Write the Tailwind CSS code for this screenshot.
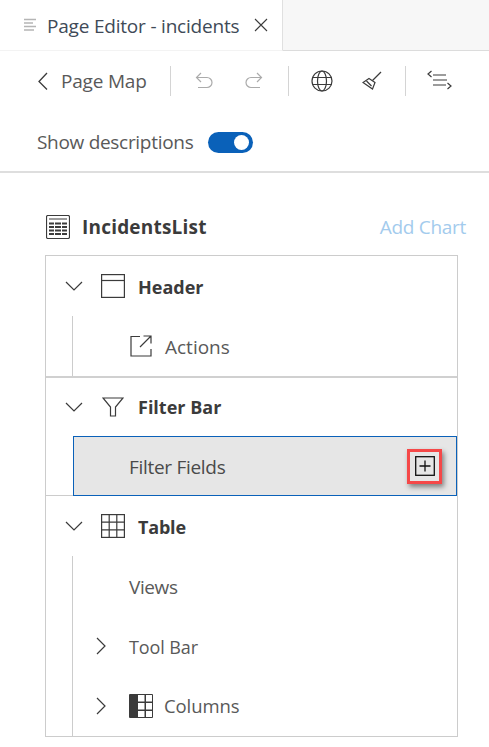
<!DOCTYPE html>
<html lang="en">
<head>
    <meta charset="UTF-8">
    <meta name="viewport" content="width=device-width, initial-scale=1.0">
    <title>Page Editor - incidents</title>
    <script src="https://cdn.jsdelivr.net/npm/@tailwindcss/browser@4"></script>
</head>
<body class="bg-white font-['Open_Sans',sans-serif] text-[#3b3b3b] h-[747px] w-[489px] overflow-hidden">

    <!-- Tab bar -->
    <div class="flex h-[51px]">
        <div class="flex items-center w-[283px] border-r border-[#e0e0e0] pl-[24px] border-b border-b-[#f3f3f3]">
            <svg width="13" height="14" viewBox="0 0 13 14" class="mr-[10px] text-[#b5b5b5]" fill="none" stroke="currentColor" stroke-width="1.300"><path d="M0 1.500h12M0 5h9M0 8.500h12M0 12h10"/></svg>
            <span class="pt-[2px] text-[19px] tracking-[-0.2px] text-[#404a57] whitespace-nowrap">Page Editor - incidents</span>
            <svg width="14" height="14" viewBox="0 0 14 14" class="ml-[15px]" fill="none" stroke="#3b3b3b" stroke-width="1.100"><path d="M1 1l12 12M13 1L1 13"/></svg>
        </div>
        <div class="flex-1 bg-[#f7f7f7] border-b border-[#dcdcdc]"></div>
    </div>

    <!-- Toolbar -->
    <div class="flex items-center h-[30px] mt-[15px] pl-[37px]">
        <svg width="12" height="18" viewBox="0 0 12 18" fill="none" stroke="#3b3b3b" stroke-width="1.300"><path d="M10 1L2 9.500l8 8"/></svg>
        <span class="ml-[12px] text-[19px] tracking-[-0.2px] text-[#595959] whitespace-nowrap">Page Map</span>
        <div class="ml-[23px] w-px h-[30px] bg-[#d4d4d4]"></div>
        <svg class="ml-[23px]" width="20" height="20" viewBox="0 0 20 20" fill="none" stroke="#ababab" stroke-width="1.200"><path d="M7 2L2.500 6.500 7 11"/><path d="M2.500 6.500H13a5 5 0 0 1 5 5v0a5 5 0 0 1-5 5H4"/></svg>
        <svg class="ml-[30px]" width="20" height="20" viewBox="0 0 20 20" fill="none" stroke="#ababab" stroke-width="1.200"><path d="M13 2l4.500 4.500L13 11"/><path d="M17.500 6.500H7a5 5 0 0 0-5 5v0a5 5 0 0 0 5 5h9"/></svg>
        <div class="ml-[24px] w-px h-[30px] bg-[#d4d4d4]"></div>
        <svg class="ml-[22px]" width="22" height="22" viewBox="0 0 22 22" fill="none" stroke="#3b3b3b" stroke-width="1.200"><circle cx="11" cy="11" r="10"/><ellipse cx="11" cy="11" rx="4.500" ry="10"/><path d="M1.500 7.500h19M1.500 14.500h19"/></svg>
        <svg class="ml-[29px]" width="20" height="20" viewBox="0 0 20 20" fill="none" stroke="#3b3b3b" stroke-width="1.200"><path d="M19 1l-8.500 8.500"/><path d="M7 7.500l6 4-2.500 6.500L1 11.500z"/><path d="M4.500 10l5 5"/></svg>
        <div class="ml-[23px] w-px h-[30px] bg-[#d4d4d4]"></div>
        <svg class="ml-[21px] -mt-[2px]" width="25" height="20" viewBox="0 0 25 20" fill="none" stroke="#3b3b3b" stroke-width="1.200"><path d="M4.500 1L1 4l3.500 3"/><path d="M6 5h13M6 10h14M6 15h13"/><path d="M20.500 13l3.500 3-3.500 3"/></svg>
    </div>

    <!-- Show descriptions -->
    <div class="flex items-center h-[22px] mt-[35px] pl-[37px]">
        <span class="text-[19px] tracking-[-0.3px] text-[#595959] whitespace-nowrap">Show descriptions</span>
        <div class="ml-[15px] w-[45px] h-[21px] rounded-full bg-[#0a61b9] flex items-center justify-end pr-[4px]">
            <div class="w-[15px] h-[15px] rounded-full bg-white"></div>
        </div>
    </div>

    <div class="mt-[18px] h-[2px] bg-[#dedede]"></div>

    <!-- Title row -->
    <div class="flex items-center h-[30px] mt-[39px] pl-[46px] pr-[23px]">
        <svg width="24" height="24" viewBox="0 0 24 24" fill="none" stroke="#3b3b3b"><rect x="0.500" y="0.500" width="23" height="23" rx="1.500" stroke-width="1.200"/><path d="M3 4h18" stroke-width="1"/><path d="M3 8.500h18M3 12h18M3 15.500h18M3 19h18" stroke-width="2"/><path d="M8.500 7v14M15.500 7v14" stroke="#fff" stroke-width="1"/></svg>
        <span class="ml-[12px] text-[19px] font-bold tracking-[0.2px] text-[#3b3b3b]">IncidentsList</span>
        <span class="ml-auto text-[19px] tracking-[-0.3px] text-[#a3cbed]">Add Chart</span>
    </div>

    <!-- Tree -->
    <div class="mt-[13px] mx-[45px] w-[413px] h-[482px] border border-[#cccccc] flex flex-col">
        <!-- Header -->
        <div class="flex items-center h-[60px] shrink-0 pl-[19px]">
            <svg width="18" height="10" viewBox="0 0 18 10" fill="none" stroke="#3b3b3b" stroke-width="1.200"><path d="M1 1l8 8 8-8"/></svg>
            <svg class="ml-[18px]" width="24" height="24" viewBox="0 0 24 24" fill="none" stroke="#3b3b3b" stroke-width="1.200"><rect x="0.600" y="0.600" width="22.800" height="22.800"/><path d="M0.600 6.500h22.800"/></svg>
            <span class="ml-[13px] pt-[2px] text-[18px] font-bold">Header</span>
        </div>
        <div class="flex items-center h-[60px] shrink-0 ml-[26px] border-l border-[#cccccc] pl-[57px]">
            <svg width="22" height="22" viewBox="0 0 22 22" fill="none" stroke="#3b3b3b" stroke-width="1.200"><path d="M10 1.500H1v19.500h20v-7"/><path d="M10 12L21 1M13.500 1H21v7.500"/></svg>
            <span class="ml-[13px] pt-[2px] text-[19px] text-[#595959]">Actions</span>
        </div>
        <div class="h-[2px] shrink-0 bg-[#d0d0d0]"></div>
        <!-- Filter Bar -->
        <div class="flex items-center h-[58px] shrink-0 pl-[19px]">
            <svg width="18" height="10" viewBox="0 0 18 10" fill="none" stroke="#3b3b3b" stroke-width="1.200"><path d="M1 1l8 8 8-8"/></svg>
            <svg class="ml-[19px]" width="22" height="20" viewBox="0 0 22 20" fill="none" stroke="#3b3b3b" stroke-width="1.200"><path d="M1 1h20l-7.500 9v9h-5v-9z"/></svg>
            <span class="ml-[14px] text-[18px] font-bold">Filter Bar</span>
        </div>
        <div class="flex h-[60px] shrink-0">
            <div class="w-[27px] h-px self-end bg-[#cccccc]"></div>
            <div class="flex-1 flex items-center justify-between bg-[#e6e6e6] border border-[#0a61b9] pl-[55px] pr-[14px]">
                <span class="pt-[2px] text-[19px] tracking-[-0.3px] text-[#4a4a4a]">Filter Fields</span>
                <div class="w-[35px] h-[35px] border-[3px] border-[#f54848] flex items-center justify-center shadow-[2px_3px_5px_rgba(0,0,0,0.45)]">
                    <svg width="20" height="20" viewBox="0 0 20 20" fill="none" stroke="#111" stroke-width="1.300"><rect x="0.700" y="0.700" width="18.600" height="18.600"/><path d="M10 4.500v11M4.500 10h11"/></svg>
                </div>
            </div>
        </div>
        <!-- Table -->
        <div class="flex items-center h-[60px] shrink-0 pl-[19px]">
            <svg width="18" height="10" viewBox="0 0 18 10" fill="none" stroke="#3b3b3b" stroke-width="1.200"><path d="M1 1l8 8 8-8"/></svg>
            <svg class="ml-[18px]" width="24" height="24" viewBox="0 0 24 24" fill="none" stroke="#3b3b3b" stroke-width="1.200"><rect x="0.600" y="0.600" width="22.800" height="22.800"/><path d="M8.200 0.600v22.800M15.800 0.600v22.800M0.600 8.200h22.800M0.600 15.800h22.800"/></svg>
            <span class="ml-[13px] pt-[2px] text-[18px] font-bold tracking-[-0.2px]">Table</span>
        </div>
        <div class="flex-1 ml-[26px] border-l border-[#cccccc] flex flex-col">
            <div class="flex items-center h-[60px] pl-[56px]">
                <span class="pt-[2px] text-[19px] tracking-[-0.4px] text-[#595959]">Views</span>
            </div>
            <div class="flex items-center h-[60px] pl-[23px]">
                <svg width="10" height="18" viewBox="0 0 10 18" fill="none" stroke="#3b3b3b" stroke-width="1.200"><path d="M1 1l8 8-8 8"/></svg>
                <span class="ml-[23px] pt-[2px] text-[18px] tracking-[-0.1px] text-[#595959]">Tool Bar</span>
            </div>
            <div class="flex items-center h-[60px] pl-[23px]">
                <svg width="10" height="18" viewBox="0 0 10 18" fill="none" stroke="#3b3b3b" stroke-width="1.200"><path d="M1 1l8 8-8 8"/></svg>
                <svg class="ml-[23px]" width="24" height="24" viewBox="0 0 24 24"><rect width="24" height="24" rx="1" fill="#3b3b3b"/><path d="M9 1h6.500v6.500H9zM17 1h6v6.500h-6zM9 9h6.500v6.500H9zM17 9h6v6.500h-6zM9 17h6.500v6H9zM17 17h6v6h-6z" fill="#fff"/></svg>
                <span class="ml-[11px] text-[18.500px] tracking-[-0.1px] text-[#595959]">Columns</span>
            </div>
        </div>
    </div>

</body>
</html>
